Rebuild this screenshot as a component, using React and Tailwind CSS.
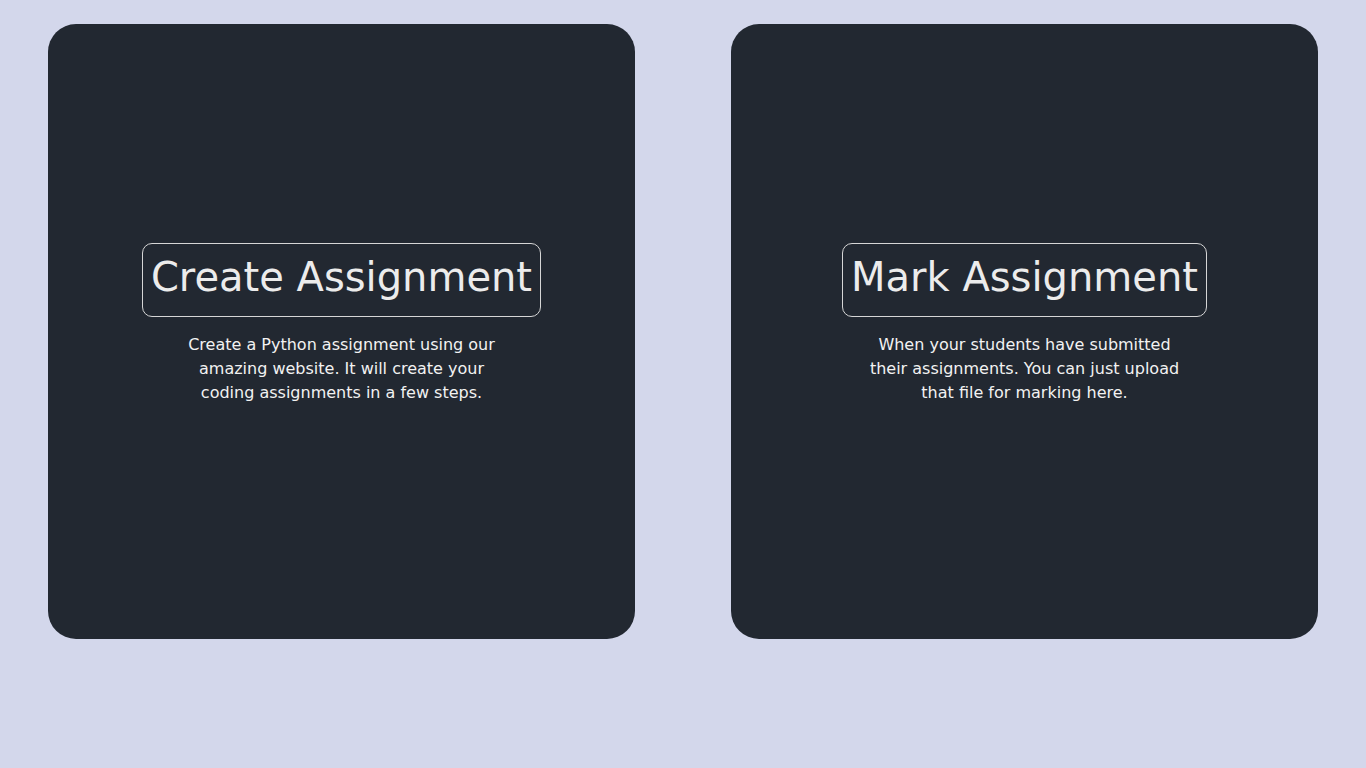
const cards = [
  {
    title: "Create Assignment",
    text: "Create a Python assignment using our amazing website. It will create your coding assignments in a few steps.",
  },
  {
    title: "Mark Assignment",
    text: "When your students have submitted their assignments. You can just upload that file for marking here.",
  },
];

const App = () => {
  return (
    <div
      className="min-h-screen bg-[#d3d7eb] px-12 pt-6"
      style={{ fontFamily: '"DejaVu Sans", sans-serif' }}
    >
      <div className="grid grid-cols-2 gap-24">
        {cards.map((card) => (
          <div
            key={card.title}
            className="h-[615px] rounded-[28px] bg-[#222831] flex flex-col items-center justify-center"
          >
            <h1 className="border border-[#d6d6d6] rounded-[10px] px-2 pt-[9px] pb-[15px] text-[40px] leading-[48px] text-[#ececec]">
              {card.title}
            </h1>
            <p className="mt-4 mb-4 max-w-[320px] text-center text-base leading-6 text-[#f2f2f2]">
              {card.text}
            </p>
          </div>
        ))}
      </div>
    </div>
  );
};

export default App;
